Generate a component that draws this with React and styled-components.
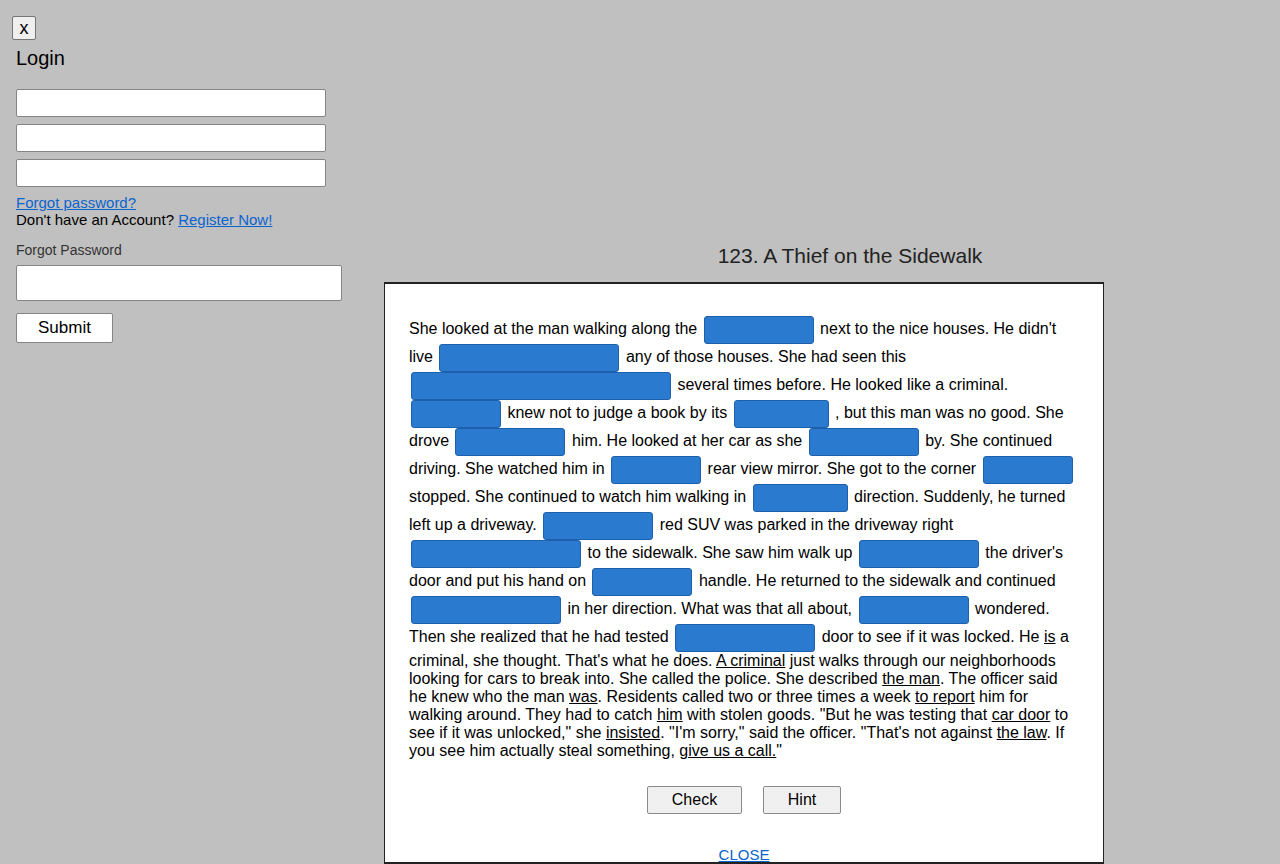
import React from "react";
import styled, { createGlobalStyle } from "styled-components";

const Global = createGlobalStyle`
  html, body { margin: 0; padding: 0; }
  body {
    background: #c0c0c0;
    font-family: "Liberation Sans", Arial, sans-serif;
    color: #000;
    height: 864px;
    overflow: hidden;
  }
`;

const Page = styled.div`
  display: flex;
  align-items: flex-start;
  width: 1280px;
  height: 864px;
`;

const Sidebar = styled.aside`
  width: 384px;
  flex: none;
  box-sizing: border-box;
  padding: 16px 0 0 12px;
`;

const CloseX = styled.button`
  display: block;
  width: 24px;
  height: 24px;
  padding: 0;
  box-sizing: border-box;
  background: #efefef;
  border: 1px solid #767676;
  border-radius: 2px;
  font-family: "Liberation Sans", Arial, sans-serif;
  font-size: 18px;
  line-height: 20px;
  color: #000;
`;

const Form = styled.div`
  padding-left: 4px;
  display: flex;
  flex-direction: column;
  align-items: flex-start;
`;

const Heading = styled.div`
  margin-top: 7px;
  font-size: 20px;
  line-height: 23px;
`;

const Fields = styled.div`
  margin-top: 19px;
  display: flex;
  flex-direction: column;
  gap: 7px;
`;

const Field = styled.input`
  box-sizing: border-box;
  width: ${(p) => p.$w}px;
  height: ${(p) => p.$h}px;
  margin: 0;
  background: #fff;
  border: 1px solid #858585;
  border-radius: 2px;
`;

const Links = styled.div`
  margin-top: 7px;
  font-size: 15px;
  line-height: 17px;
`;

const Link = styled.a`
  color: #0a64cf;
  text-decoration: underline;
  cursor: pointer;
`;

const Label = styled.div`
  margin-top: 14px;
  font-size: 14px;
  line-height: 16px;
  color: #333;
`;

const ResetField = styled(Field)`
  margin-top: 7px;
`;

const SubmitBtn = styled.button`
  margin-top: 12px;
  box-sizing: border-box;
  width: 97px;
  height: 30px;
  background: #fff;
  border: 1px solid #858585;
  border-radius: 2px;
  font-family: "Liberation Sans", Arial, sans-serif;
  font-size: 17px;
  color: #000;
`;

const Main = styled.main`
  flex: 1;
  display: flex;
  flex-direction: column;
`;

const Title = styled.h2`
  margin: 244px 0 14px;
  padding-left: 36px;
  text-align: center;
  font-weight: normal;
  font-size: 21px;
  line-height: 24px;
  color: #222;
`;

const Panel = styled.section`
  box-sizing: border-box;
  width: 720px;
  background: #fff;
  border: 1px solid #222;
  border-top-width: 2px;
  border-bottom-width: 2px;
  padding: 32px 24px 0;
`;

const Story = styled.p`
  margin: 0;
  font-size: 16px;
  line-height: normal;
  color: #000;
`;

const Blank = styled.span`
  display: inline-block;
  box-sizing: border-box;
  width: ${(p) => p.$w}px;
  height: 28px;
  margin: 0 2px;
  vertical-align: middle;
  background: #2a7ad0;
  border: 1px solid #1f60ab;
  border-radius: 3px;
`;

const U = styled.span`
  text-decoration: underline;
`;

const Actions = styled.div`
  margin-top: 26px;
  display: flex;
  justify-content: center;
  gap: 21px;
`;

const ActionBtn = styled.button`
  box-sizing: border-box;
  width: ${(p) => p.$w}px;
  height: 28px;
  background: #f0f0f0;
  border: 1px solid #8a8a8a;
  border-radius: 2px;
  font-family: "Liberation Sans", Arial, sans-serif;
  font-size: 16px;
  color: #000;
`;

const CloseRow = styled.div`
  margin-top: 34px;
  text-align: center;
  font-size: 15px;
  line-height: 14px;
`;

export default function App() {
  return (
    <>
      <Global />
      <Page>
        <Sidebar>
          <CloseX>x</CloseX>
          <Form>
            <Heading>Login</Heading>
            <Fields>
              <Field $w={310} $h={28} />
              <Field $w={310} $h={28} />
              <Field $w={310} $h={28} />
            </Fields>
            <Links>
              <Link>Forgot password?</Link>
              <br />
              Don't have an Account? <Link>Register Now!</Link>
            </Links>
            <Label>Forgot Password</Label>
            <ResetField $w={326} $h={36} />
            <SubmitBtn>Submit</SubmitBtn>
          </Form>
        </Sidebar>
        <Main>
          <Title>123. A Thief on the Sidewalk</Title>
          <Panel>
            <Story>
              She looked at the man walking along the <Blank $w={110} /> next to
              the nice houses. He didn't live <Blank $w={180} /> any of those
              houses. She had seen this <Blank $w={260} /> several times before.
              He looked like a criminal. <Blank $w={90} /> knew not to judge a
              book by its <Blank $w={95} /> , but this man was no good. She drove{" "}
              <Blank $w={110} /> him. He looked at her car as she{" "}
              <Blank $w={110} /> by. She continued driving. She watched him in{" "}
              <Blank $w={90} /> rear view mirror. She got to the corner{" "}
              <Blank $w={90} /> stopped. She continued to watch him walking in{" "}
              <Blank $w={95} /> direction. Suddenly, he turned left up a
              driveway. <Blank $w={110} /> red SUV was parked in the driveway
              right <Blank $w={170} /> to the sidewalk. She saw him walk up{" "}
              <Blank $w={120} /> the driver's door and put his hand on{" "}
              <Blank $w={100} /> handle. He returned to the sidewalk and continued{" "}
              <Blank $w={150} /> in her direction. What was that all about,{" "}
              <Blank $w={110} /> wondered. Then she realized that he had tested{" "}
              <Blank $w={140} /> door to see if it was locked. He <U>is</U> a
              criminal, she thought. That's what he does. <U>A criminal</U> just
              walks through our neighborhoods looking for cars to break into. She
              called the police. She described <U>the man</U>. The officer said
              he knew who the man <U>was</U>. Residents called two or three times
              a week <U>to report</U> him for walking around. They had to catch{" "}
              <U>him</U> with stolen goods. "But he was testing that{" "}
              <U>car door</U> to see if it was unlocked," she <U>insisted</U>.
              "I'm sorry," said the officer. "That's not against <U>the law</U>.
              If you see him actually steal something, <U>give us a call.</U>"
            </Story>
            <Actions>
              <ActionBtn $w={95}>Check</ActionBtn>
              <ActionBtn $w={78}>Hint</ActionBtn>
            </Actions>
            <CloseRow>
              <Link>CLOSE</Link>
            </CloseRow>
          </Panel>
        </Main>
      </Page>
    </>
  );
}
